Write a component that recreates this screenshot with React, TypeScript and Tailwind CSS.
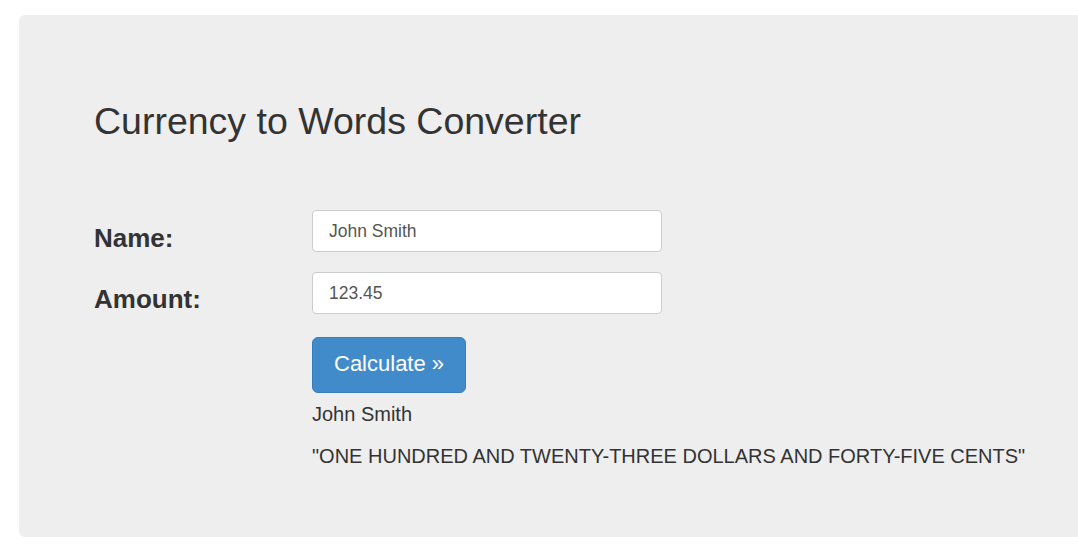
export default function App() {
  return (
    <div className="bg-white min-h-[554px] pt-[15px] pl-[19px] overflow-hidden" style={{ fontFamily: '"Liberation Sans", Arial, sans-serif' }}>
      <div className="bg-[#eeeeee] rounded-l-[6px] w-[1080px] h-[522px] pl-[75px] pt-[86px] text-[#333333]">
        <h1 className="text-[37.5px] leading-[40px] font-normal">Currency to Words Converter</h1>
        <div className="mt-[69px] flex flex-col">
          <div className="flex items-center h-[42px]">
            <label className="w-[218px] text-[26px] font-bold pt-[14px]">Name:</label>
            <input className="w-[350px] h-[42px] bg-white border border-[#cccccc] rounded-[4px] px-[16px] text-[17.5px] text-[#555555] outline-none" defaultValue="John Smith" />
          </div>
          <div className="flex items-center h-[42px] mt-[20px]">
            <label className="w-[218px] text-[26px] font-bold pt-[12px]">Amount:</label>
            <input className="w-[350px] h-[42px] bg-white border border-[#cccccc] rounded-[4px] px-[16px] text-[17.5px] text-[#555555] outline-none" defaultValue="123.45" />
          </div>
          <div className="ml-[218px] mt-[23px] flex flex-col items-start">
            <button className="h-[56px] px-[21px] pb-[3px] bg-[#428bca] border border-[#357ebd] rounded-[6px] text-white text-[22px]">Calculate »</button>
            <div className="mt-[8px] text-[20px] leading-[26px]">John Smith</div>
            <div className="mt-[16px] text-[20px] leading-[26px]">"ONE HUNDRED AND TWENTY-THREE DOLLARS AND FORTY-FIVE CENTS"</div>
          </div>
        </div>
      </div>
    </div>
  );
}
